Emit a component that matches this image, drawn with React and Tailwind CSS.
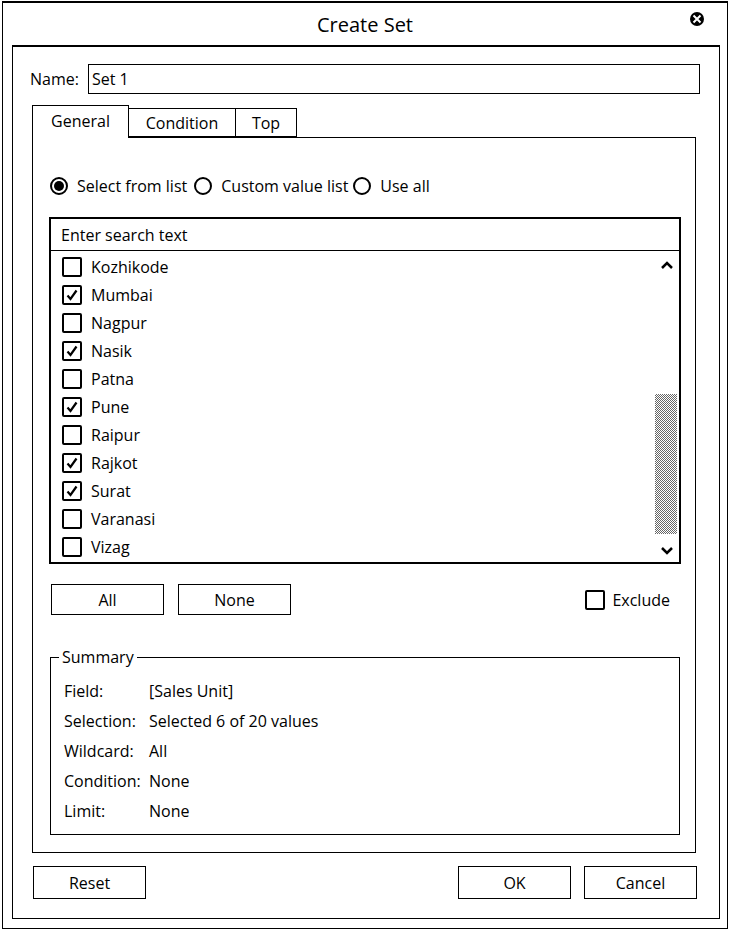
import React from "react";

const font = { fontFamily: '"Open Sans", "Noto Sans", sans-serif' };

function Check({ checked }) {
  return (
    <div className="w-[20px] h-[20px] border-2 border-black rounded-[2px] flex items-center justify-center bg-white shrink-0">
      {checked && (
        <svg width="14" height="14" viewBox="0 0 14 14">
          <path d="M2.5 7.5 L5.5 11 L11.5 2.5" fill="none" stroke="black" strokeWidth="2.2" />
        </svg>
      )}
    </div>
  );
}

function Radio({ on }) {
  return (
    <div className="w-[18px] h-[18px] rounded-full border-2 border-black flex items-center justify-center shrink-0">
      {on && <div className="w-[10px] h-[10px] rounded-full bg-black" />}
    </div>
  );
}

const items = [
  ["Kozhikode", false],
  ["Mumbai", true],
  ["Nagpur", false],
  ["Nasik", true],
  ["Patna", false],
  ["Pune", true],
  ["Raipur", false],
  ["Rajkot", true],
  ["Surat", true],
  ["Varanasi", false],
  ["Vizag", false],
];

const summary = [
  ["Field:", "[Sales Unit]"],
  ["Selection:", "Selected 6 of 20 values"],
  ["Wildcard:", "All"],
  ["Condition:", "None"],
  ["Limit:", "None"],
];

export default function App() {
  return (
    <div className="w-[731px] h-[934px] bg-white text-black text-[16px] pt-px pl-[2px]" style={font}>
      <div className="w-[726px] h-[928px] border border-black border-t-2 flex flex-col">
        {/* title bar */}
        <div className="h-[42px] relative flex items-center justify-center">
          <span className="text-[20px] leading-none mt-[2px]">Create Set</span>
          <svg className="absolute right-[22px] top-[8px]" width="16" height="16" viewBox="0 0 16 16">
            <circle cx="8" cy="8" r="7" fill="black" />
            <path d="M4.5 4.5 L11.5 11.5 M11.5 4.5 L4.5 11.5" stroke="white" strokeWidth="2" />
          </svg>
        </div>
        {/* inner frame */}
        <div className="ml-[9px] w-[708px] h-[874px] border border-black border-t-2 flex flex-col">
          {/* name row */}
          <div className="flex items-center mt-[17px] pl-[17px]">
            <span className="w-[58px]">Name:</span>
            <div className="w-[612px] h-[30px] border border-black flex items-center pl-[3px]">Set 1</div>
          </div>
          {/* tabs */}
          <div className="flex items-end ml-[19px] mt-[10px] h-[33px]">
            <div className="w-[97px] h-[33px] border border-black border-b-0 bg-white flex items-start justify-center pt-[3px] relative top-px z-10">
              General
            </div>
            <div className="w-[107px] h-[29px] border border-black border-l-0 flex items-center justify-center">
              Condition
            </div>
            <div className="w-[61px] h-[29px] border border-black border-l-0 flex items-center justify-center">
              Top
            </div>
          </div>
          {/* panel */}
          <div className="ml-[19px] w-[664px] h-[716px] border border-black flex flex-col pl-[16px] pr-[14px]">
            <div className="flex items-center mt-[38px] h-[20px]">
              <div className="ml-[1px]"><Radio on /></div>
              <span className="ml-[9px]">Select from list</span>
              <div className="ml-[7px]"><Radio /></div>
              <span className="ml-[9px]">Custom value list</span>
              <div className="ml-[5px]"><Radio /></div>
              <span className="ml-[9px]">Use all</span>
            </div>
            {/* search */}
            <div className="mt-[21px] w-[632px] h-[34px] border-2 border-black border-b flex items-center pl-[10px]">
              Enter search text
            </div>
            <div className="w-[632px] h-[313px] border-2 border-t-0 border-black flex">
              <div className="flex-1 flex flex-col pl-[11px] pt-[2px]">
                {items.map(([name, c]) => (
                  <div key={name} className="h-[28px] flex items-center">
                    <Check checked={c} />
                    <span className="ml-[9px]">{name}</span>
                  </div>
                ))}
              </div>
              <div className="w-[24px] flex flex-col items-center pt-[9px] pb-[6px]">
                <svg width="12" height="10" viewBox="0 0 12 10">
                  <path d="M1 8 L6 3 L11 8" fill="none" stroke="black" strokeWidth="2.5" />
                </svg>
                <div className="flex-1 w-full flex flex-col justify-end pb-[12px] pr-[1px]">
                  <div className="h-[140px] w-[22px] bg-[repeating-conic-gradient(#000_0_25%,#fff_0_50%)] bg-[length:2px_2px] opacity-60" />
                </div>
                <svg width="12" height="10" viewBox="0 0 12 10">
                  <path d="M1 2 L6 7 L11 2" fill="none" stroke="black" strokeWidth="2.5" />
                </svg>
              </div>
            </div>
            {/* buttons */}
            <div className="flex items-center mt-[20px] h-[31px]">
              <div className="ml-[2px] w-[113px] h-[31px] border border-black flex items-center justify-center">All</div>
              <div className="ml-[14px] w-[113px] h-[31px] border border-black flex items-center justify-center">None</div>
              <div className="ml-auto flex items-center mr-[11px]">
                <div className="w-[20px] h-[20px] border-2 border-black rounded-[2px]" />
                <span className="ml-[7px]">Exclude</span>
              </div>
            </div>
            {/* summary */}
            <div className="mt-[42px] ml-[1px] w-[630px] h-[178px] border border-black relative flex flex-col pl-[13px] pt-[18px]">
              <span className="absolute -top-[12px] left-[8px] bg-white px-[3px] leading-[22px]">Summary</span>
              {summary.map(([k, v]) => (
                <div key={k} className="h-[30px] flex items-center">
                  <span className="w-[85px]">{k}</span>
                  <span>{v}</span>
                </div>
              ))}
            </div>
          </div>
          {/* bottom buttons */}
          <div className="flex items-center mt-[13px] pl-[20px] pr-[22px]">
            <div className="w-[113px] h-[33px] border border-black flex items-center justify-center">Reset</div>
            <div className="ml-auto w-[113px] h-[33px] border border-black flex items-center justify-center">OK</div>
            <div className="ml-[13px] w-[113px] h-[33px] border border-black flex items-center justify-center">Cancel</div>
          </div>
        </div>
      </div>
    </div>
  );
}
